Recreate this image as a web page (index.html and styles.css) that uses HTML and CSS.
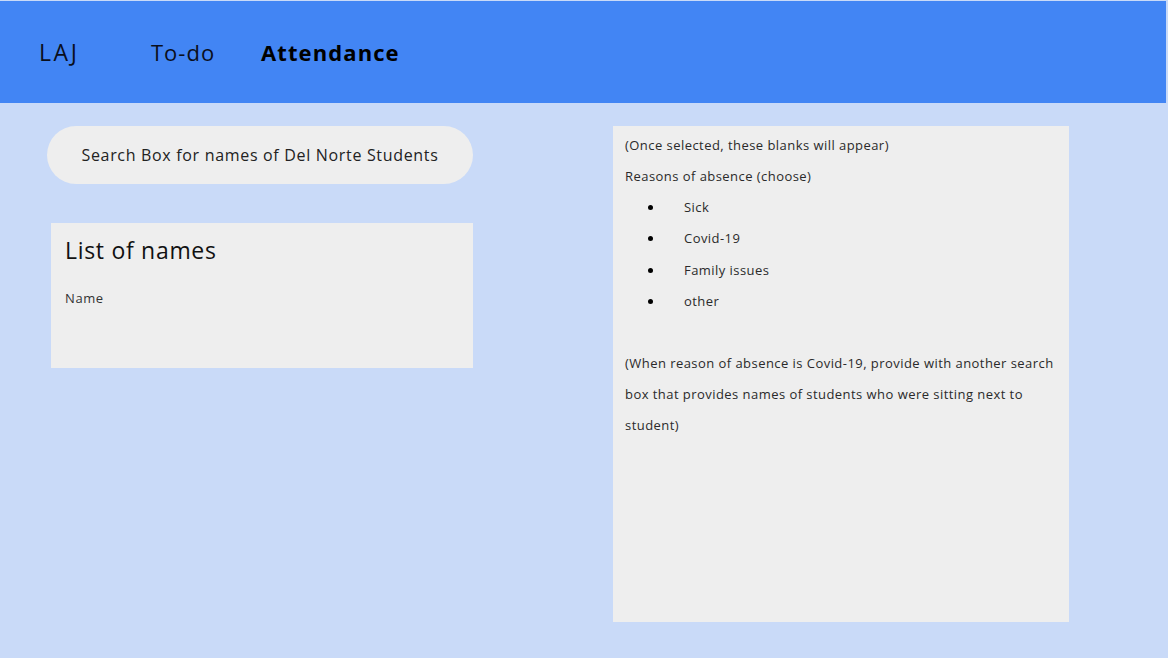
FILE: index.html
```html
<!DOCTYPE html>
<html>
<head>
<meta charset="utf-8">
<link rel="stylesheet" href="styles.css">
</head>
<body>
<header class="topbar">
  <span class="nav-item nav-laj">LAJ</span>
  <span class="nav-item nav-todo">To-do</span>
  <span class="nav-item nav-active">Attendance</span>
</header>
<main class="content">
  <section class="left-col">
    <div class="search-pill">Search Box for names of Del Norte Students</div>
    <div class="names-card">
      <h2 class="names-title">List of names</h2>
      <p class="names-item">Name</p>
    </div>
  </section>
  <section class="detail-card">
    <p class="line">(Once selected, these blanks will appear)</p>
    <p class="line">Reasons of absence (choose)</p>
    <ul class="reasons">
      <li class="line reason">Sick</li>
      <li class="line reason">Covid-19</li>
      <li class="line reason">Family issues</li>
      <li class="line reason">other</li>
    </ul>
    <p class="line spacer"></p>
    <p class="line">(When reason of absence is Covid-19, provide with another search box that provides names of students who were sitting next to student)</p>
  </section>
</main>
</body>
</html>
```
FILE: styles.css
```css
* { box-sizing: border-box; }
html, body { margin: 0; padding: 0; }
body {
  background: #c9daf8;
  font-family: "Open Sans", "Noto Sans", sans-serif;
  color: #222;
  width: 1168px;
  height: 658px;
  overflow: hidden;
  padding-top: 1px;
}
.topbar {
  width: 1166px;
  height: 102px;
  background: #4285f4;
  display: flex;
  align-items: center;
  padding-left: 39px;
  color: #0a0f1c;
}
.nav-item {
  font-size: 22px;
  font-weight: 400;
  letter-spacing: 1px;
}
.nav-laj { width: 112px; font-size: 23px; letter-spacing: 2.6px; }
.nav-todo { width: 110px; }
.nav-active { font-weight: 700; color: #000; letter-spacing: 1.1px; }

.content {
  display: flex;
  padding-top: 23px;
  padding-left: 47px;
}
.left-col {
  width: 426px;
  display: flex;
  flex-direction: column;
  align-items: flex-end;
}
.search-pill {
  width: 426px;
  height: 58px;
  border-radius: 29px;
  background: #eeeeee;
  display: flex;
  align-items: center;
  justify-content: center;
  font-size: 16px;
  color: #222;
  letter-spacing: 0.68px;
}
.names-card {
  margin-top: 39px;
  width: 422px;
  height: 145px;
  background: #eeeeee;
  padding: 12px 14px;
}
.names-title {
  margin: 0;
  font-size: 23px;
  font-weight: 400;
  color: #111;
  line-height: 30px;
  letter-spacing: 0.7px;
}
.names-item {
  margin: 24px 0 0;
  font-size: 13px;
  color: #333;
  letter-spacing: 0.6px;
}
.detail-card {
  margin-left: 140px;
  width: 456px;
  height: 496px;
  background: #eeeeee;
  padding: 4px 12px;
}
.line {
  margin: 0;
  font-size: 13px;
  line-height: 31px;
  color: #2a2a2a;
  letter-spacing: 0.45px;
}
.reasons {
  list-style: none;
  margin: 0;
  padding: 0;
}
.reason {
  display: flex;
  align-items: center;
}
.reason:nth-child(n+3) { margin-top: 0.5px; }
.reason::before {
  content: "";
  width: 5px;
  height: 5px;
  border-radius: 50%;
  background: #000;
  margin-left: 23px;
  margin-right: 31px;
  flex: none;
}
.spacer { height: 31px; }
```
